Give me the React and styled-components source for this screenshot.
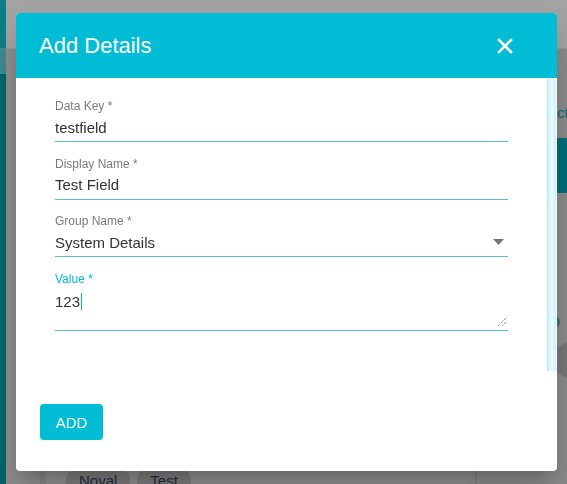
import React from 'react'
import styled, { createGlobalStyle } from 'styled-components';

const GlobalStyle = createGlobalStyle`
  html, body {
    margin: 0;
    padding: 0;
    width: 567px;
    height: 484px;
    overflow: hidden;
    font-family: "Liberation Sans", Arial, sans-serif;
  }
`

const fields = [
  { label: 'Data Key *', value: 'testfield' },
  { label: 'Display Name *', value: 'Test Field' },
  { label: 'Group Name *', value: 'System Details', select: true },
]

const App = () => {
  return (
    <>
      <GlobalStyle />
      {/* the dimmed page that lies under the dialog */}
      <Page>
        <Sidebar>
          <div className="top" />
          <div className="band" />
        </Sidebar>
        <Main>
          <TopBar />
          <Body>
            <LeftCard>
              <Chips>
                <Chip>Noyal</Chip>
                <Chip>Test</Chip>
              </Chips>
            </LeftCard>
            <RightPanel>
              <div className="ele">elect</div>
              <div className="tealbox" />
              <div className="co">Co</div>
              <div className="circle" />
            </RightPanel>
          </Body>
        </Main>
      </Page>

      <Backdrop>
        <Dialog>
          <Header>
            <Title>Add Details</Title>
            <CloseButton aria-label="close">
              <svg width="16" height="16" viewBox="0 0 16 16">
                <path d="M2 2 L14 14 M14 2 L2 14" stroke="#fff" strokeWidth="2.6" strokeLinecap="square" />
              </svg>
            </CloseButton>
          </Header>

          <Content>
            <Fields>
              {fields.map((f) => (
                <Field key={f.label}>
                  <Label>{f.label}</Label>
                  <Value>
                    <span>{f.value}</span>
                    {f.select && (
                      <svg width="11" height="6" viewBox="0 0 11 6">
                        <path d="M0 0 L11 0 L5.5 6 Z" fill="#757575" />
                      </svg>
                    )}
                  </Value>
                </Field>
              ))}
              <Field>
                <Label focused>Value *</Label>
                <TextArea>
                  <span>123</span><Caret />
                  <Grip width="10" height="10" viewBox="0 0 10 10">
                    <path d="M9 1 L1 9 M9 5 L5 9" stroke="#555" strokeWidth="1" strokeDasharray="1 1" />
                  </Grip>
                </TextArea>
              </Field>
            </Fields>
            <ScrollTrack />
          </Content>

          <Actions>
            <AddButton>ADD</AddButton>
          </Actions>
        </Dialog>
      </Backdrop>
    </>
  )
}

export default App;


const Page = styled.div`
width: 567px;
height: 484px;
display: flex;
background: #8d8d8d;
`
const Sidebar = styled.div`
width: 6px;
display: flex;
flex-direction: column;
background: #00646c;

.top{
  height: 48px;
  background: #0b7f86;
}
.band{
  height: 26px;
  background: #3f8a8e;
}
`
const Main = styled.div`
flex: 1;
display: flex;
flex-direction: column;
`
const TopBar = styled.div`
height: 48px;
background: #a3a3a3;
border-bottom: 1px solid #999;
`
const Body = styled.div`
flex: 1;
display: flex;
gap: 8px;
padding: 0 0 0 34px;
`
const LeftCard = styled.div`
flex: 1;
display: flex;
flex-direction: column;
justify-content: flex-end;
background: #8f8f8f;
border-left: 6px solid #858585;
`
const Chips = styled.div`
display: flex;
gap: 7px;
padding: 0 0 0 20px;
margin-bottom: -8px;
`
const Chip = styled.div`
padding: 3px 13px;
border-radius: 14px;
background: #7b7b7b;
color: #1f2a3c;
font-size: 15px;
`
const RightPanel = styled.div`
width: 90px;
display: flex;
flex-direction: column;
background: #8b8b8b;
border-left: 2px solid #828282;
padding-top: 55px;

.ele{
  color: #0c6a73;
  font-size: 15px;
  padding-left: 60px;
  white-space: nowrap;
}
.tealbox{
  height: 55px;
  margin-top: 17px;
  background: #006f78;
}
.co{
  color: #0c6a73;
  font-size: 18px;
  margin-top: 118px;
  padding-left: 60px;
}
.circle{
  width: 36px;
  height: 36px;
  border-radius: 50%;
  background: #777;
  margin: 10px 0 0 76px;
}
`

const Backdrop = styled.div`
position: fixed;
inset: 0;
padding: 13px 10px 13px 16px;
`
const Dialog = styled.div`
width: 541px;
height: 458px;
display: flex;
flex-direction: column;
background: #fff;
border-radius: 4px;
overflow: hidden;
box-shadow: 0 11px 15px -7px rgba(0,0,0,0.2), 0 24px 38px 3px rgba(0,0,0,0.14);
`
const Header = styled.div`
height: 65px;
flex-shrink: 0;
display: flex;
align-items: center;
justify-content: space-between;
padding: 0 44px 0 23px;
background: #00bcd4;
`
const Title = styled.h2`
margin: 0;
padding-top: 1px;
color: #fff;
font-size: 22px;
font-weight: normal;
`
const CloseButton = styled.button`
display: flex;
padding: 0;
border: none;
background: transparent;
`
const Content = styled.div`
height: 293px;
flex-shrink: 0;
display: flex;
`
const Fields = styled.div`
flex: 1;
display: flex;
flex-direction: column;
gap: 14.5px;
padding: 21px 39px 0 39px;
`
const Field = styled.div`
display: flex;
flex-direction: column;
`
const Label = styled.div`
font-size: 12px;
line-height: 14px;
color: ${(p) => (p.focused ? '#00bcd4' : '#7a7a7a')};
`
const Value = styled.div`
display: flex;
align-items: center;
justify-content: space-between;
height: 20px;
margin-top: 4px;
padding: 0 4px 4px 0;
font-size: 15px;
color: #333;
border-bottom: 1px solid #56bfd6;
`
const TextArea = styled.div`
position: relative;
height: 37px;
margin-top: 4px;
padding-top: 3px;
font-size: 15px;
line-height: 18px;
color: #333;
border-bottom: 1px solid #56bfd6;
`
const Caret = styled.span`
display: inline-block;
width: 1px;
height: 17px;
margin-left: 1px;
vertical-align: -3px;
background: #00bcd4;
`
const Grip = styled.svg`
position: absolute;
right: 1px;
bottom: 3px;
`
const ScrollTrack = styled.div`
width: 8px;
margin: 1px 1px 0 0;
background: linear-gradient(to right, #c6f1f6, #eefbfd 50%, #c6f1f6);
border-left: 1px solid #b5ecf3;
`
const Actions = styled.div`
flex: 1;
padding: 33px 24px 0;
`
const AddButton = styled.button`
width: 63px;
height: 36px;
border: none;
border-radius: 4px;
background: #00bcd4;
color: #fff;
font-family: "Liberation Sans", Arial, sans-serif;
font-size: 15px;
`
